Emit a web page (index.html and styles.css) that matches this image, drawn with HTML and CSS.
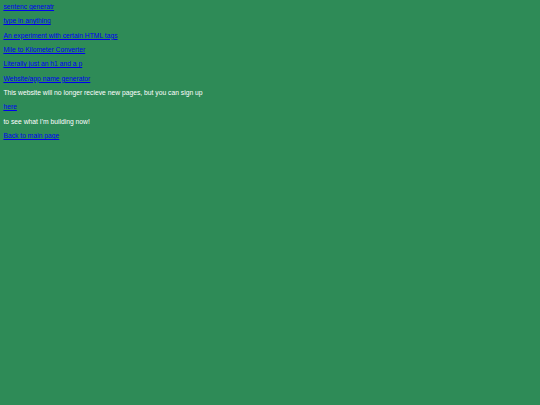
FILE: index.html
```html
<!DOCTYPE html>
<html>
<head>
<meta charset="utf-8">
<link rel="stylesheet" href="styles.css">
</head>
<body>
<main class="page">
<p class="line"><a href="#">sentenc generatr</a></p>
<p class="line"><a href="#">type in anything</a></p>
<p class="line"><a href="#">An experiment with certain HTML tags</a></p>
<p class="line"><a href="#">Mile to Kilometer Converter</a></p>
<p class="line"><a href="#">Literally just an h1 and a p</a></p>
<p class="line"><a href="#">Website/app name generator</a></p>
<p class="line">This website will no longer recieve new pages, but you can sign up</p>
<p class="line"><a href="#">here</a></p>
<p class="line">to see what I'm building now!</p>
<p class="line"><a href="#">Back to main page</a></p>
</main>
</body>
</html>
```
FILE: styles.css
```css
html, body {
  margin: 0;
  background: #2e8b57;
}
body {
  font-family: "Liberation Sans", Arial, sans-serif;
  font-size: 6.75px;
  color: #ffffff;
}
.page {
  display: flex;
  flex-direction: column;
  align-items: flex-start;
  gap: 6.5px;
  padding: 3px 3.4px;
}
.line {
  margin: 0;
  line-height: 7.83px;
}
.line a {
  color: #0000ee;
}
```
